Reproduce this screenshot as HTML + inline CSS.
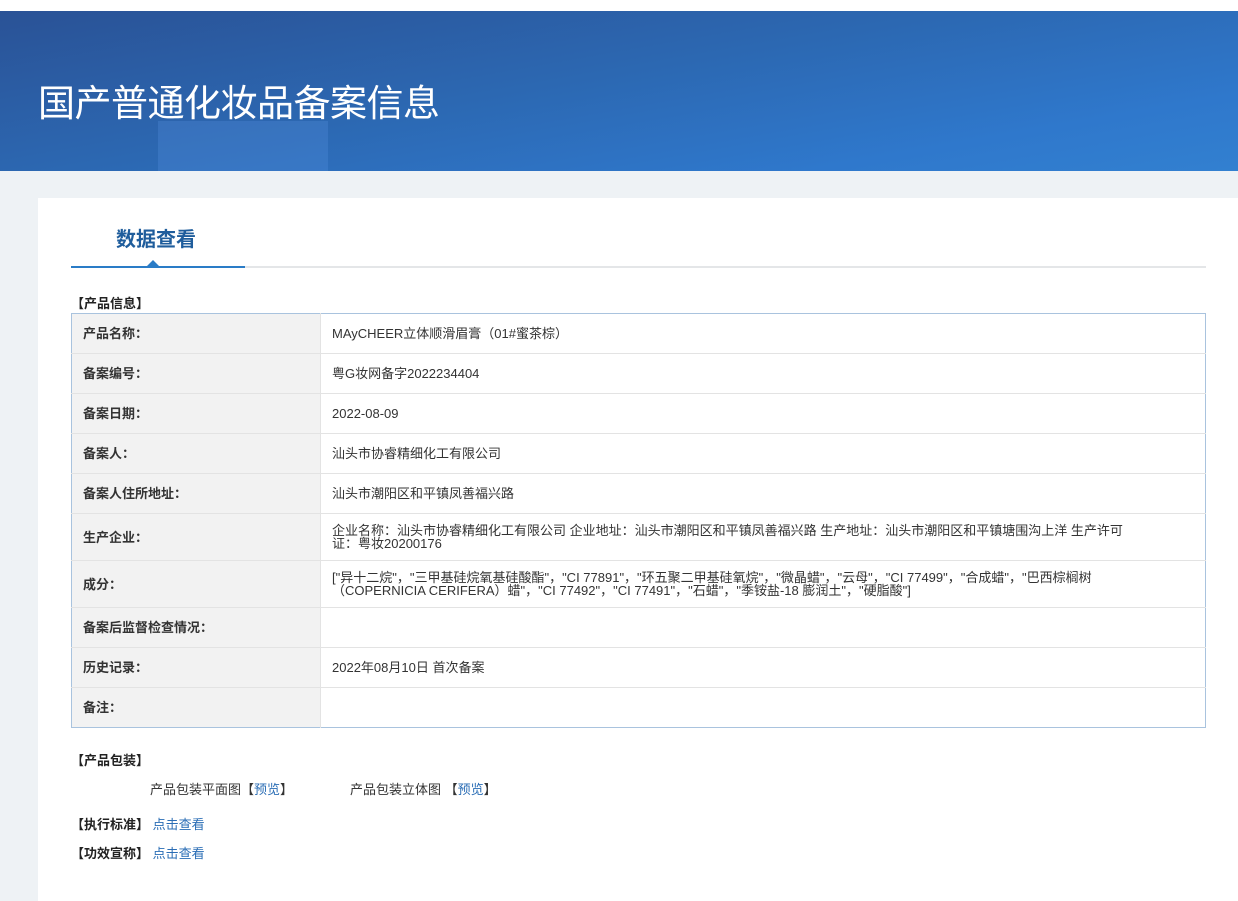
<!DOCTYPE html>
<html><head><meta charset="utf-8"><style>
*{margin:0;padding:0;box-sizing:border-box}
body{width:1238px;height:901px;overflow:hidden;background:#eef2f5;font-family:"Liberation Sans","Noto Sans CJK SC",sans-serif;font-size:13px;color:#333;position:relative}
.top{height:11px;background:#fff}
.banner{position:absolute;top:11px;left:0;width:1238px;height:160px;background:linear-gradient(170deg,#2a5296 0%,#2c68b2 45%,#2f78cc 80%,#3280d0 100%);overflow:hidden}
.banner .g{position:absolute;left:158px;top:110px;width:170px;height:50px;background:rgba(90,150,230,.25)}
.banner h1{position:absolute;left:38px;top:62px;font-size:37px;font-weight:normal;color:#fff;letter-spacing:-0.5px;font-family:"Liberation Sans","Noto Sans CJK SC",sans-serif}
.card{position:absolute;left:38px;top:198px;width:1200px;height:703px;background:#fff}
.tab{position:absolute;left:78px;top:25px;font-size:20px;font-weight:bold;color:#1f5d9c}
.line{position:absolute;left:33px;top:68px;width:1135px;height:2px;background:#e4e6e8}
.line .b{position:absolute;left:0;top:0;width:174px;height:2px;background:#2a7cc7}
.tri{position:absolute;left:108px;top:62px;width:0;height:0;border-left:7px solid transparent;border-right:7px solid transparent;border-bottom:7px solid #2a7cc7}
.h{position:absolute;font-weight:bold;color:#222}
table{position:absolute;left:33px;top:115px;width:1135px;border-collapse:collapse;border:1px solid #a9c3de}
td{border-bottom:1px solid #e3e3e3;height:40px;padding:0 11px;vertical-align:middle;line-height:13px}
td.l{width:249px;background:#f2f2f2;font-weight:bold;color:#333;border-right:1px solid #e3e3e3}
tr.t td{height:47px}
a{color:#2a6db5;text-decoration:none}
</style></head><body>
<div class="top"></div>
<div class="banner"><div class="g"></div><h1>国产普通化妆品备案信息</h1></div>
<div class="card">
<div class="tab">数据查看</div>
<div class="line"><div class="b"></div></div>
<div class="tri"></div>
<div class="h" style="left:33px;top:95px">【产品信息】</div>
<table>
<tr><td class="l">产品名称：</td><td>MAyCHEER立体顺滑眉膏（01#蜜茶棕）</td></tr>
<tr><td class="l">备案编号：</td><td>粤G妆网备字2022234404</td></tr>
<tr><td class="l">备案日期：</td><td>2022-08-09</td></tr>
<tr><td class="l">备案人：</td><td>汕头市协睿精细化工有限公司</td></tr>
<tr><td class="l">备案人住所地址：</td><td>汕头市潮阳区和平镇凤善福兴路</td></tr>
<tr class="t"><td class="l">生产企业：</td><td style="padding-right:60px">企业名称：汕头市协睿精细化工有限公司 企业地址：汕头市潮阳区和平镇凤善福兴路 生产地址：汕头市潮阳区和平镇塘围沟上洋 生产许可证：粤妆20200176</td></tr>
<tr class="t"><td class="l">成分：</td><td style="padding-right:60px">["异十二烷"，"三甲基硅烷氧基硅酸酯"，"CI 77891"，"环五聚二甲基硅氧烷"，"微晶蜡"，"云母"，"CI 77499"，"合成蜡"，"巴西棕榈树（COPERNICIA CERIFERA）蜡"，"CI 77492"，"CI 77491"，"石蜡"，"季铵盐-18 膨润土"，"硬脂酸"]</td></tr>
<tr><td class="l">备案后监督检查情况：</td><td></td></tr>
<tr><td class="l">历史记录：</td><td>2022年08月10日 首次备案</td></tr>
<tr><td class="l" style="border-bottom:none">备注：</td><td style="border-bottom:none"></td></tr>
</table>
<div class="h" style="left:33px;top:552px">【产品包装】</div>
<div style="position:absolute;left:112px;top:581px">产品包装平面图【<a>预览</a>】</div>
<div style="position:absolute;left:312px;top:581px">产品包装立体图 【<a>预览</a>】</div>
<div style="position:absolute;left:33px;top:616px"><b style="color:#222">【执行标准】</b> <a>点击查看</a></div>
<div style="position:absolute;left:33px;top:645px"><b style="color:#222">【功效宣称】</b> <a>点击查看</a></div>
</div>
</body></html>
